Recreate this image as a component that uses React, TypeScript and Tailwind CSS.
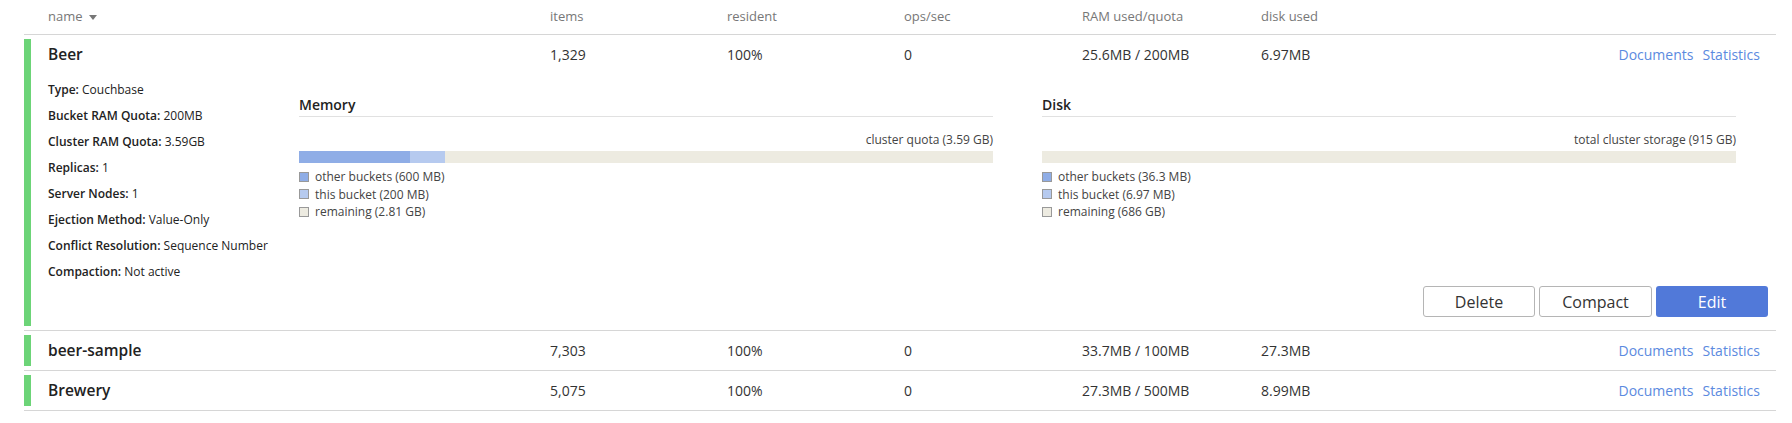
import React from "react";

type Bucket = {
  name: string;
  items: string;
  resident: string;
  ops: string;
  ram: string;
  disk: string;
  open?: boolean;
};

const buckets: Bucket[] = [
  { name: "Beer", items: "1,329", resident: "100%", ops: "0", ram: "25.6MB / 200MB", disk: "6.97MB", open: true },
  { name: "beer-sample", items: "7,303", resident: "100%", ops: "0", ram: "33.7MB / 100MB", disk: "27.3MB" },
  { name: "Brewery", items: "5,075", resident: "100%", ops: "0", ram: "27.3MB / 500MB", disk: "8.99MB" },
];

const details = [
  ["Type:", "Couchbase"],
  ["Bucket RAM Quota:", "200MB"],
  ["Cluster RAM Quota:", "3.59GB"],
  ["Replicas:", "1"],
  ["Server Nodes:", "1"],
  ["Ejection Method:", "Value-Only"],
  ["Conflict Resolution:", "Sequence Number"],
  ["Compaction:", "Not active"],
];

const cols = "grid grid-cols-[502px_177px_177px_178px_179px_200px_1fr] items-center";

function Usage({
  title,
  total,
  other,
  mine,
  legend,
}: {
  title: string;
  total: string;
  other: number;
  mine: number;
  legend: [string, string, string];
}) {
  return (
    <div className="w-[694px]">
      <div className="border-b border-[#e1e1e1] pb-[1px] text-[14px] font-semibold text-[#222]">{title}</div>
      <div className="mt-[14px] text-right text-[12px] text-[#444]">{total}</div>
      <div className="mt-[2px] flex h-[12px] bg-[#edebe1]">
        <div className="h-full bg-[#8fade6]" style={{ width: `${other}%` }} />
        <div className="h-full bg-[#b6caef]" style={{ width: `${mine}%` }} />
      </div>
      <div className="mt-[5px] flex flex-col text-[12px] leading-[17.5px] text-[#444]">
        <div className="flex items-center gap-[6px]">
          <span className="h-[10px] w-[10px] border border-[#999] bg-[#8fade6]" />
          {legend[0]}
        </div>
        <div className="flex items-center gap-[6px]">
          <span className="h-[10px] w-[10px] border border-[#999] bg-[#b6caef]" />
          {legend[1]}
        </div>
        <div className="flex items-center gap-[6px]">
          <span className="h-[10px] w-[10px] border border-[#999] bg-[#edebe1]" />
          {legend[2]}
        </div>
      </div>
    </div>
  );
}

function Row({ b }: { b: Bucket }) {
  return (
    <div className="border-b border-[#d6d6d6] py-[4px]">
      <div className="border-l-[7px] border-[#6cd477] pl-[17px]">
        <div className={`${cols} h-[31px] text-[14px] text-[#333]`}>
          <div className="text-[15.5px] font-semibold text-[#222]">{b.name}</div>
          <div>{b.items}</div>
          <div>{b.resident}</div>
          <div>{b.ops}</div>
          <div>{b.ram}</div>
          <div>{b.disk}</div>
          <div className="flex justify-end gap-[9px] pr-[16px] text-[#5b8ae0]">
            <span>Documents</span>
            <span>Statistics</span>
          </div>
        </div>
        {b.open && (
          <div className="pb-[9px]">
            <div className="flex pt-[7px]">
              <div className="flex w-[251px] flex-col text-[12px] leading-[26px] text-[#222]">
                {details.map(([k, v]) => (
                  <div key={k}>
                    <span className="font-semibold">{k}</span> {v}
                  </div>
                ))}
              </div>
              <div className="flex gap-[49px] pt-[17px]">
                <Usage
                  title="Memory"
                  total="cluster quota (3.59 GB)"
                  other={16}
                  mine={5}
                  legend={["other buckets (600 MB)", "this bucket (200 MB)", "remaining (2.81 GB)"]}
                />
                <Usage
                  title="Disk"
                  total="total cluster storage (915 GB)"
                  other={0}
                  mine={0}
                  legend={["other buckets (36.3 MB)", "this bucket (6.97 MB)", "remaining (686 GB)"]}
                />
              </div>
            </div>
            <div className="mt-[1px] flex justify-end gap-[4px] pr-[8px]">
              <button className="h-[31px] w-[112px] rounded-[3px] border border-[#b5b5b5] bg-white text-[16px] text-[#333]">
                Delete
              </button>
              <button className="h-[31px] w-[113px] rounded-[3px] border border-[#b5b5b5] bg-white text-[16px] text-[#333]">
                Compact
              </button>
              <button className="h-[31px] w-[112px] rounded-[3px] bg-[#5179d9] text-[16px] text-white">Edit</button>
            </div>
          </div>
        )}
      </div>
    </div>
  );
}

export default function App() {
  return (
    <div className="h-[423px] w-[1792px] bg-white font-['Open_Sans',sans-serif]">
      <div className="ml-[24px] mr-[16px]">
        <div className={`${cols} h-[35px] border-b border-[#d6d6d6] pl-[24px] text-[13px] text-[#777]`}>
          <div className="flex items-center gap-[6px]">
            name
            <svg width="8" height="5" viewBox="0 0 8 5">
              <path d="M0 0h8L4 5z" fill="#777" />
            </svg>
          </div>
          <div>items</div>
          <div>resident</div>
          <div>ops/sec</div>
          <div>RAM used/quota</div>
          <div>disk used</div>
          <div />
        </div>
        {buckets.map((b) => (
          <Row key={b.name} b={b} />
        ))}
      </div>
    </div>
  );
}
